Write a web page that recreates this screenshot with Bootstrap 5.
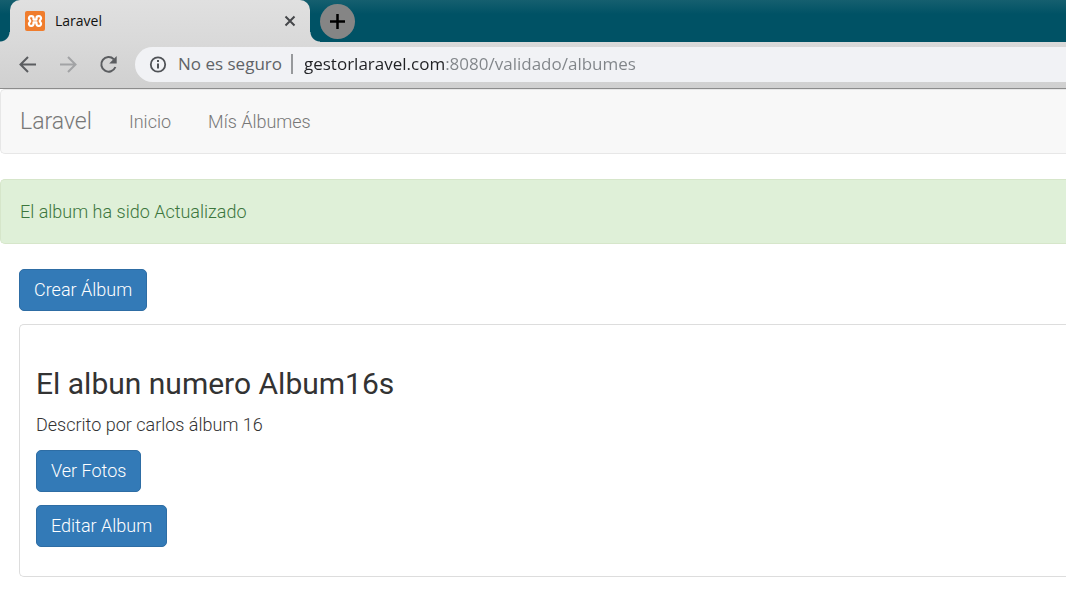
<!DOCTYPE html>
<html lang="es">
<head>
<meta charset="utf-8">
<meta name="viewport" content="width=device-width, initial-scale=1">
<title>Laravel</title>
<link href="https://cdn.jsdelivr.net/npm/bootstrap@5.3.0/dist/css/bootstrap.min.css" rel="stylesheet">
<style>
  body { font-family: Roboto, "Liberation Sans", sans-serif; font-size: 18px; font-weight: 300; line-height: 26px; color: #333; background: #fff; overflow-x: hidden; }

  /* Browser frame */
  .browser { font-family: "Open Sans", "Noto Sans", sans-serif; font-weight: 400; }
  .tab-strip { height: 42px; padding-left: 10px; gap: 10px; background: linear-gradient(#155f6f, #005265 14px, #005265); }
  .browser-tab { position: relative; width: 300px; height: 42px; padding: 0 14px 0 15px; gap: 10px; font-size: 14px; line-height: 18px; color: #111; background: linear-gradient(#e0e0e0, #d9d9d9); border-radius: 10px 10px 0 0; }
  .browser-tab::before, .browser-tab::after { content: ""; position: absolute; bottom: 0; width: 10px; height: 10px; }
  .browser-tab::before { right: 100%; background: radial-gradient(circle at 0 0, transparent 9px, #d9d9d9 10px); }
  .browser-tab::after { left: 100%; background: radial-gradient(circle at 100% 0, transparent 9px, #d9d9d9 10px); }
  .plain-btn { padding: 0; border: 0; background: none; display: flex; color: #5b5d60; }
  .new-tab { width: 35px; height: 35px; border-radius: 50%; background: #858585; color: #000; align-items: center; justify-content: center; }
  .toolbar { height: 47px; padding: 0 0 2px 18px; background: linear-gradient(#d9d9d9, #d0d0d0); border-bottom: 1px solid #8c8c8c; }
  .nav-buttons { gap: 20px; margin-right: 16px; }
  .address { height: 35px; padding-left: 13px; border-radius: 18px 0 0 18px; background: #f1f2f5; font-size: 17px; line-height: 24px; color: #606367; }
  .security { gap: 10px; }
  .divider-bar { width: 2px; height: 20px; margin: 0 11px 0 9px; background: #97999c; }
  .address input { padding: 0; border: 0; outline: 0; min-width: 0; font-family: "Open Sans", "Noto Sans", sans-serif; color: #808488; -webkit-text-fill-color: transparent; background: linear-gradient(90deg, #202124 141px, #808488 141px); -webkit-background-clip: text; background-clip: text; }

  /* Page */
  .site-nav { height: 65px; padding: 0 19px; background: #f8f8f8; border: 1px solid #e7e7e7; border-right: 0; border-radius: 5px 0 0 5px; margin-bottom: 25px; }
  .site-nav .navbar-brand { padding: 0; margin-right: 37px; font-size: 23px; line-height: 32px; color: #777; }
  .site-nav .navbar-nav { gap: 37px; }
  .site-nav .navbar-nav .nav-link { padding: 0; color: #777; }
  .notice { padding: 19px; margin-bottom: 25px; line-height: 25px; color: #3c763d; background: #dff0d8; border: 1px solid #d6e6ca; border-right: 0; border-radius: 5px 0 0 5px; }
  .page-body { padding-left: 19px; }
  .btn-main { --bs-btn-color: #fff; --bs-btn-bg: #337ab7; --bs-btn-border-color: #2e6da4; --bs-btn-hover-bg: #286090; --bs-btn-hover-color: #fff; --bs-btn-font-size: 18px; --bs-btn-font-weight: 300; --bs-btn-line-height: 26px; --bs-btn-padding-x: 14px; --bs-btn-padding-y: 7px; --bs-btn-border-radius: 5px; }
  .album { margin-top: 13px; padding: 41px 16px 29px; border: 1px solid #ddd; border-right: 0; border-radius: 5px 0 0 5px; }
  .album h2 { margin: 0 0 10px; font-size: 30px; font-weight: 400; line-height: 36px; }
  .album p { margin: 0 0 12px; }
  .album .actions { gap: 13px; }
</style>
</head>
<body>
<header class="browser">
  <div class="tab-strip d-flex align-items-center">
    <div class="browser-tab d-flex align-items-center">
      <svg width="20" height="20" viewBox="0 0 20 20" aria-hidden="true">
        <rect width="20" height="20" rx="2" fill="#f07d2d"/>
        <path d="M8.500 8.600V7.200a2 2 0 0 0-2-2H6a2 2 0 0 0-1.400 3.500q1.200 1.300 0 2.600A2 2 0 0 0 6 14.800h.5a2 2 0 0 0 2-2v-1.400h3v1.400a2 2 0 0 0 2 2h.5a2 2 0 0 0 1.400-3.500q-1.200-1.300 0-2.600A2 2 0 0 0 14 5.200h-.5a2 2 0 0 0-2 2v1.400z" fill="none" stroke="#fff" stroke-width="2.200" stroke-linejoin="round"/>
      </svg>
      <span class="flex-grow-1">Laravel</span>
      <button class="plain-btn" type="button" aria-label="Cerrar pestaña">
        <svg width="12" height="12" viewBox="0 0 12 12"><path d="M1.500 1.500l9 9M10.500 1.500l-9 9" stroke="#45474a" stroke-width="2"/></svg>
      </button>
    </div>
    <button class="plain-btn new-tab" type="button" aria-label="Nueva pestaña">
      <svg width="15" height="15" viewBox="0 0 15 15"><path d="M7.500 0v15M0 7.500h15" stroke="currentColor" stroke-width="2.500"/></svg>
    </button>
  </div>
  <div class="toolbar d-flex align-items-center">
    <div class="nav-buttons d-flex">
      <button class="plain-btn" type="button" aria-label="Atrás">
        <svg width="20" height="20" viewBox="0 0 20 20" fill="none" stroke="currentColor" stroke-width="2"><path d="M18 10.500H3M10 3L2.500 10.500l7.500 7.500"/></svg>
      </button>
      <button class="plain-btn" type="button" aria-label="Adelante">
        <svg width="20" height="20" viewBox="0 0 20 20" fill="none" stroke="#a2a3a5" stroke-width="2"><path d="M2 10.500h15M10 3l7.500 7.500-7.500 7.500"/></svg>
      </button>
      <button class="plain-btn" type="button" aria-label="Recargar">
        <svg width="21" height="20" viewBox="0 0 21 20"><path d="M15.800 5.200A7.300 7.300 0 1 0 17.400 13" fill="none" stroke="currentColor" stroke-width="2"/><path d="M18.700 2v7.500h-7.500z" fill="currentColor"/></svg>
      </button>
    </div>
    <div class="address d-flex align-items-center flex-grow-1">
      <div class="security d-flex align-items-center text-nowrap">
        <svg width="20" height="20" viewBox="0 0 20 20" aria-hidden="true"><circle cx="10" cy="10.500" r="7.200" fill="none" stroke="#4f5256" stroke-width="1.800"/><path d="M10 9.500v5M10 6v2" stroke="#4f5256" stroke-width="2"/></svg>
        <span>No es seguro</span>
      </div>
      <span class="divider-bar"></span>
      <input class="flex-grow-1" type="text" aria-label="Dirección" value="gestorlaravel.com:8080/validado/albumes">
    </div>
  </div>
</header>

<nav class="site-nav navbar navbar-expand">
  <a class="navbar-brand" href="#">Laravel</a>
  <ul class="navbar-nav">
    <li class="nav-item"><a class="nav-link" href="#">Inicio</a></li>
    <li class="nav-item"><a class="nav-link" href="#">Mís Álbumes</a></li>
  </ul>
</nav>

<div class="notice" role="alert">El album ha sido Actualizado</div>

<main class="page-body">
  <button class="btn btn-main" type="button">Crear Álbum</button>
  <section class="album">
    <h2>El albun numero Album16s</h2>
    <p>Descrito por carlos álbum 16</p>
    <div class="actions d-flex flex-column align-items-start">
      <button class="btn btn-main" type="button">Ver Fotos</button>
      <button class="btn btn-main" type="button">Editar Album</button>
    </div>
  </section>
</main>
<script src="https://cdn.jsdelivr.net/npm/bootstrap@5.3.0/dist/js/bootstrap.bundle.min.js"></script>
</body>
</html>
